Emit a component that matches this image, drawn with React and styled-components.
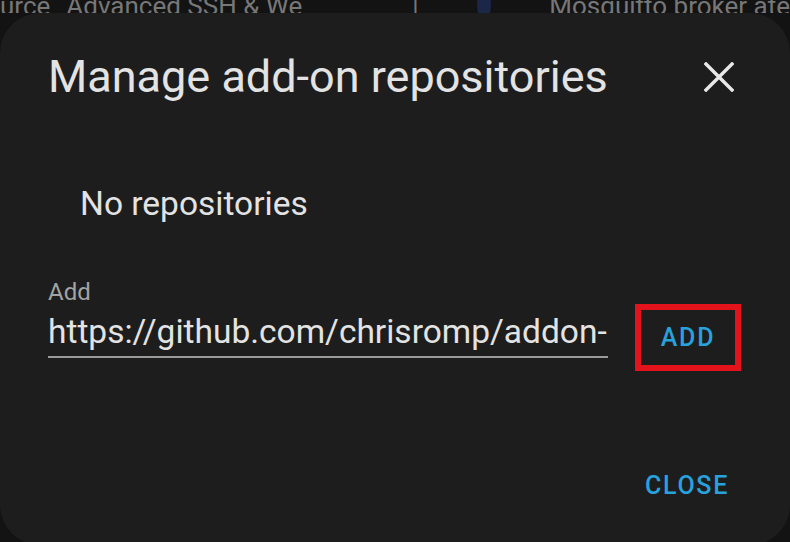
import styled, { createGlobalStyle } from "styled-components";

const GlobalStyle = createGlobalStyle`
  html, body {
    margin: 0;
    background: #131313;
    font-family: Roboto, "Noto Sans", sans-serif;
    overflow: hidden;
  }
`;

const Page = styled.div`
  width: 790px;
  height: 542px;
  overflow: hidden;
  background: #131313;
`;

const Backdrop = styled.div`
  height: 13px;
  overflow: hidden;
  display: flex;
  align-items: flex-end;
  color: #777;
  font-size: 26px;
  line-height: 26px;
  white-space: nowrap;
  & > span {
    margin-bottom: -6px;
  }
`;

const BackdropText = styled.span`
  margin-left: ${(p) => p.$ml || "0"};
`;

const Dot = styled.span`
  display: inline-block;
  width: 28px;
  height: 28px;
  margin: 0 58px 0 58px;
  border-radius: 50%;
  background: #1c2748;
`;

const Dialog = styled.div`
  width: 790px;
  height: 532px;
  box-sizing: border-box;
  padding: 38px 48px 0 48px;
  border-radius: 40px;
  background: #1d1d1d;
`;

const Header = styled.div`
  display: flex;
  align-items: center;
  justify-content: space-between;
  height: 52px;
`;

const Title = styled.h2`
  margin: 0;
  font-size: 45px;
  line-height: 52px;
  font-weight: 400;
  color: #e3e3e3;
`;

const IconButton = styled.button`
  width: 46px;
  height: 46px;
  padding: 0;
  border: none;
  background: none;
  display: flex;
  align-items: center;
  justify-content: center;
  color: #e8e8e8;
`;

const Empty = styled.p`
  margin: 83px 0 0 0;
  padding-left: 32px;
  font-size: 33.5px;
  line-height: 36px;
  color: #e3e3e3;
`;

const AddRow = styled.div`
  display: flex;
  align-items: flex-start;
  gap: 27px;
  margin-top: 57px;
`;

const Field = styled.label`
  display: flex;
  flex-direction: column;
  width: 560px;
`;

const FieldLabel = styled.span`
  font-size: 24px;
  line-height: 26px;
  color: #a3a3a3;
  margin-bottom: 9px;
`;

const Input = styled.input`
  font-family: Roboto, "Noto Sans", sans-serif;
  font-size: 33.5px;
  line-height: 36px;
  height: 36px;
  padding: 0 0 6px 0;
  border: none;
  border-bottom: 2px solid #9a9a9a;
  background: transparent;
  color: #e3e3e3;
  outline: none;
`;

const Highlight = styled.div`
  margin-top: 25px;
  border: 6px solid #e3131b;
  display: flex;
`;

const TextButton = styled.button`
  font-family: Roboto, "Noto Sans", sans-serif;
  font-size: 25px;
  font-weight: 500;
  letter-spacing: 1.7px;
  text-transform: uppercase;
  color: #28a2dc;
  background: none;
  border: none;
  padding: ${(p) => p.$pad || "0 13px"};
  line-height: 36px;
  width: ${(p) => p.$w || "auto"};
  height: ${(p) => p.$h || "auto"};
`;

const Footer = styled.div`
  display: flex;
  justify-content: flex-end;
  margin-top: 97px;
`;

function CloseIcon() {
  return (
    <svg width="30" height="30" viewBox="0 0 30 30">
      <path d="M2 2 L28 28 M28 2 L2 28" stroke="currentColor" strokeWidth="3.4" strokeLinecap="square" />
    </svg>
  );
}

export default function App() {
  return (
    <Page>
      <GlobalStyle />
      <Backdrop>
        <BackdropText>urce</BackdropText>
        <BackdropText $ml="16px">Advanced SSH &amp; We</BackdropText>
        <BackdropText $ml="110px">|</BackdropText>
        <Dot />
        <BackdropText>Mosquitto broker ate</BackdropText>
      </Backdrop>
      <Dialog>
        <Header>
          <Title>Manage add-on repositories</Title>
          <IconButton aria-label="close">
            <CloseIcon />
          </IconButton>
        </Header>
        <Empty>No repositories</Empty>
        <AddRow>
          <Field>
            <FieldLabel>Add</FieldLabel>
            <Input defaultValue="https://github.com/chrisromp/addon-sdr" />
          </Field>
          <Highlight>
            <TextButton $pad="0" $w="94px" $h="55px">Add</TextButton>
          </Highlight>
        </AddRow>
        <Footer>
          <TextButton>Close</TextButton>
        </Footer>
      </Dialog>
    </Page>
  );
}
